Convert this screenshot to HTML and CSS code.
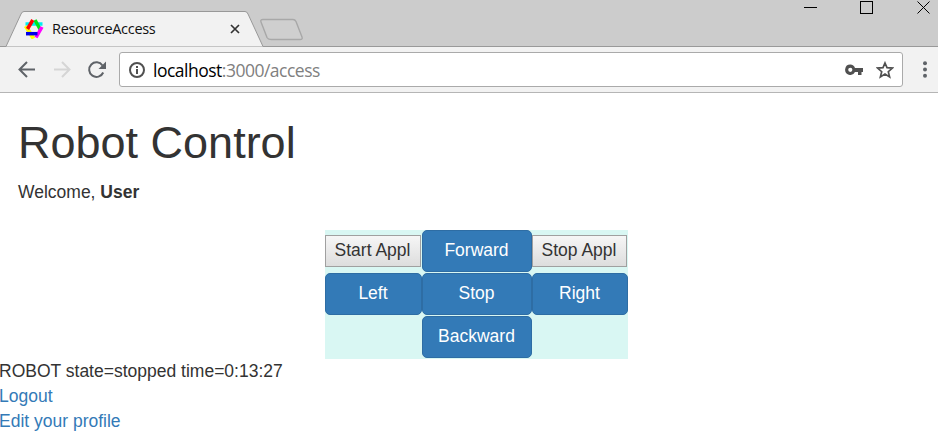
FILE: index.html
```html
<!DOCTYPE html>
<html lang="en">
<head>
<meta charset="utf-8">
<title>ResourceAccess</title>
<link rel="stylesheet" href="styles.css">
</head>
<body>
<header class="tabstrip">
  <div class="tab">
    <svg class="tab-shape" width="310" height="47" viewBox="0 0 310 47">
      <path d="M0 46.5H6L21 14Q22 11.5 24 11.5H245Q247 11.5 248 14L263 46.5H310" fill="#f2f2f2" stroke="#999"/>
      <path d="M263 19.5H293Q295 19.5 296 21.5L302 37Q303 39.5 300 39.5H271Q268 39.5 267 37.5L261 22Q260 19.5 263 19.5Z" fill="#cfcfcf" stroke="#a8a8a8" stroke-width="1.4"/>
    </svg>
    <svg class="favicon" width="20" height="20" viewBox="0 0 20 20" fill="none" stroke-width="3.5">
      <path d="M1.500 5H18.500" stroke="#00f0f0"/>
      <path d="M1.700 7L9.500 19.500" stroke="#ff0" stroke-width="4"/>
      <path d="M11 1L16.500 11" stroke="#00e51a"/>
      <path d="M18 8L12 18.500" stroke="#f0f"/>
      <path d="M2 14.700H13.500" stroke="#0000e8"/>
      <path d="M8.800 1L3.500 10" stroke="#f00"/>
    </svg>
    <span class="tab-title">ResourceAccess</span>
    <svg class="tab-close" width="10" height="10" viewBox="0 0 10 10" stroke="#333" stroke-width="1.700"><path d="M1 1L9 9M9 1L1 9"/></svg>
  </div>
  <svg class="window-controls" width="128" height="15" viewBox="0 0 128 15" fill="none" stroke="#000" stroke-width="1">
    <path d="M0 7.500H13"/><rect x="56.500" y="1.500" width="12" height="12"/><path d="M113.500 1.500L125.500 13.500M125.500 1.500L113.500 13.500"/>
  </svg>
</header>
<nav class="toolbar">
  <svg class="nav-icons" width="90" height="22" viewBox="0 0 90 22" fill="none" stroke="#5f6368" stroke-width="2">
    <path d="M17 10.500H2M9 3L1.500 10.500L9 18"/>
    <path d="M36 10.500H51M44 3L51.500 10.500L44 18" stroke="#d5d5d5"/>
    <path d="M84.500 6.500A7.300 7.300 0 1 0 85.200 13.500"/>
    <path d="M88 2.500V10H80.500Z" fill="#5f6368" stroke="none"/>
  </svg>
  <div class="omnibox">
    <svg width="16" height="16" viewBox="0 0 16 16" fill="none" stroke="#505050" stroke-width="2"><circle cx="8" cy="8" r="7"/><path d="M8 7V12M8 4V6"/></svg>
    <div class="url">localhost<span>:3000/access</span></div>
    <svg class="key" width="18" height="12" viewBox="0 0 18 12"><path fill="#505050" fill-rule="evenodd" d="M5.300.5A5.200 5.200 0 0 1 10 4H18V8H16.500V11H13V8H10A5.200 5.200 0 1 1 5.300.5ZM5.300 3.700A2.100 2.100 0 1 0 5.300 7.900A2.100 2.100 0 1 0 5.300 3.700Z"/></svg>
    <svg class="star" width="18" height="18" viewBox="0 0 18 18" fill="none" stroke="#505050" stroke-width="1.700"><path d="M9 2L11 6.700L16.400 7.100L12.300 10.700L13.600 15.900L9 13.100L4.400 15.900L5.700 10.700L1.600 7.100L7 6.700Z"/></svg>
  </div>
  <svg class="menu" width="4" height="17" viewBox="0 0 4 17" fill="#5f6368"><circle cx="2" cy="2.300" r="2"/><circle cx="2" cy="8.500" r="2"/><circle cx="2" cy="14.700" r="2"/></svg>
</nav>
<main>
  <section class="intro">
    <h1>Robot Control</h1>
    <p>Welcome, <strong>User</strong></p>
  </section>
  <div class="controls">
    <button class="plain">Start Appl</button>
    <button class="btn">Forward</button>
    <button class="plain">Stop Appl</button>
    <button class="btn">Left</button>
    <button class="btn">Stop</button>
    <button class="btn">Right</button>
    <button class="btn backward">Backward</button>
  </div>
  <div class="status">ROBOT state=stopped time=0:13:27</div>
  <div class="link"><a href="#">Logout</a></div>
  <div class="link"><a href="#">Edit your profile</a></div>
</main>
</body>
</html>
```
FILE: styles.css
```css
* { box-sizing: border-box; }
body {
  margin: 0;
  height: 439px;
  overflow: hidden;
  background: #fff;
  color: #333;
  font: 17.5px/25px "Liberation Sans", Arial, sans-serif;
}
svg { display: block; flex: none; }
.tabstrip {
  display: flex;
  justify-content: space-between;
  height: 47px;
  background: #ccc;
  border-bottom: 1px solid #999;
}
.tab {
  position: relative;
  display: flex;
  align-items: center;
  width: 310px;
  height: 47px;
  padding: 11px 0 0 24px;
}
.tab-shape { position: absolute; left: 0; top: 0; }
.favicon, .tab-title, .tab-close { position: relative; }
.tab-title {
  width: 178px;
  margin-left: 8px;
  color: #111;
  font: 14.5px/20px "Open Sans", sans-serif;
  letter-spacing: -0.3px;
}
.window-controls { margin-right: 6px; }
.toolbar {
  display: flex;
  align-items: center;
  height: 46px;
  padding: 0 11px 0 18px;
  background: #f2f2f2;
  border-bottom: 1px solid #b5b5b5;
}
.nav-icons { margin-right: 11px; }
.omnibox {
  display: flex;
  align-items: center;
  width: 784px;
  height: 35px;
  padding: 0 8px 0 9px;
  background: #fff;
  border: 1px solid #aaa;
  border-radius: 3px;
}
.url {
  flex: 1;
  margin-left: 8px;
  color: #000;
  font: 17.5px/24px "Open Sans", sans-serif;
  letter-spacing: -0.5px;
}
.url span { color: #808080; }
.star { margin-left: 13px; }
.menu { margin-left: 20px; }
.intro { height: 137px; padding: 25px 18px 0; }
h1 { margin: 0 0 12px; font-size: 45px; font-weight: 400; line-height: 49.5px; }
p { margin: 0; }
.controls {
  display: grid;
  grid-template-columns: 97px 110px 96px;
  grid-auto-rows: 43px;
  width: 303px;
  margin-left: 325px;
  background: #d9f7f3;
}
button {
  padding: 0 1px 2px 0;
  font: 17.5px/25px "Liberation Sans", Arial, sans-serif;
  white-space: nowrap;
}
.btn {
  height: 42px;
  color: #fff;
  background: #337ab7;
  border: 1px solid #2e6da4;
  border-radius: 5px;
}
.plain {
  width: calc(100% - 1px);
  height: 32px;
  margin-top: 5px;
  color: #333;
  background: linear-gradient(#f6f6f6, #ddd);
  border: 1px solid #a0a0a0;
}
.backward { grid-column: 2; }
.status, .link { margin-left: -1px; }
a { color: #337ab7; text-decoration: none; }
```
